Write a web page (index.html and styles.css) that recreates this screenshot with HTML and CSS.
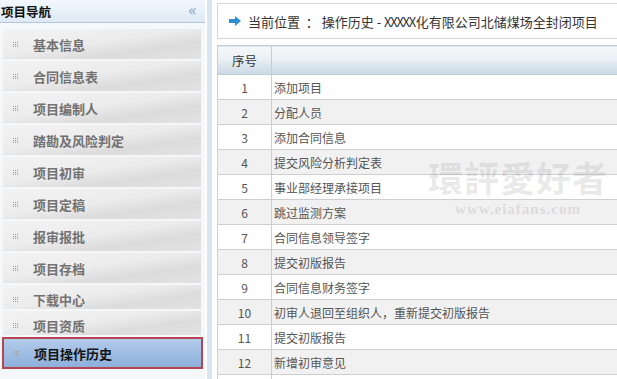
FILE: index.html
```html
<!DOCTYPE html>
<html lang="zh-CN">
<head>
    <meta charset="UTF-8">
    <meta name="viewport" content="width=device-width, initial-scale=1.0">
    <title>操作历史</title>
    <link rel="stylesheet" href="styles.css">
</head>
<body>

<!-- Menu de navigation -->
<div class="sidebar">
    <div class="sidebar-head">
        <span>项目导航</span>
        <span class="collapse">&laquo;</span>
    </div>
    <ul class="nav">
        <li><i class="dots"></i>基本信息</li>
        <li><i class="dots"></i>合同信息表</li>
        <li><i class="dots"></i>项目编制人</li>
        <li><i class="dots"></i>踏勘及风险判定</li>
        <li><i class="dots"></i>项目初审</li>
        <li><i class="dots"></i>项目定稿</li>
        <li><i class="dots"></i>报审报批</li>
        <li><i class="dots"></i>项目存档</li>
        <li class="short"><i class="dots"></i>下载中心</li>
        <li class="short"><i class="dots"></i>项目资质</li>
        <li class="active"><i class="dots"></i>项目操作历史</li>
    </ul>
</div>
<div class="splitter"></div>

<!-- Contenu -->
<div class="content">
    <div class="breadcrumb">
        <svg class="arrow" width="12" height="10" viewBox="0 0 12 10"><path d="M0 3h6V0l6 5-6 5V7H0z" fill="#2f8ed3"/></svg>
        <span>当前位置&nbsp;&nbsp;：&nbsp;操作历史 - <span class="narrow">XXXXX</span>化有限公司北储煤场全封闭项目</span>
    </div>
    <table>
        <thead>
            <tr><th class="num">序号</th><th></th></tr>
        </thead>
        <tbody id="history"></tbody>
    </table>
    <div class="watermark">
        <div class="wm-title">環評愛好者</div>
        <div class="wm-url">www.eiafans.com</div>
    </div>
</div>

<script>
    // Liste des opérations
    const steps = [
        '添加项目', '分配人员', '添加合同信息', '提交风险分析判定表',
        '事业部经理承接项目', '跳过监测方案', '合同信息领导签字', '提交初版报告',
        '合同信息财务签字', '初审人退回至组织人，重新提交初版报告', '提交初版报告', '新增初审意见', ''
    ];
    const tbody = document.getElementById('history');
    steps.forEach((s, i) => {
        const tr = document.createElement('tr');
        tr.innerHTML = `<td class="num">${s ? i + 1 : ''}</td><td>${s}</td>`;
        tbody.appendChild(tr);
    });
</script>

</body>
</html>
```

FILE: styles.css
```css
html, body {
    margin: 0;
    height: 100%;
    overflow: hidden;
}
body {
    display: flex;
    background-color: #fff;
    font-family: "Noto Sans CJK SC", "Noto Sans", sans-serif;
}
.sidebar {
    width: 205px;
    flex-shrink: 0;
    background-color: #f6f7f8;
}
.sidebar-head {
    height: 22px;
    display: flex;
    justify-content: space-between;
    align-items: center;
    padding: 0 8px 0 1px;
    background: linear-gradient(#f2f7fc, #dde9f5);
    border-bottom: 1px solid #b4c8dc;
    font-size: 12.5px;
    font-weight: bold;
    color: #111;
}
.collapse {
    font-family: "DejaVu Sans", sans-serif;
    font-weight: normal;
    font-size: 15px;
    color: #8eaacb;
}
.nav {
    list-style: none;
    margin: 0;
    padding: 6px 4px 0 3px;
    display: flex;
    flex-direction: column;
    gap: 2px;
}
.nav li {
    height: 30px;
    display: flex;
    align-items: center;
    background: linear-gradient(172deg, #f3f3f3 0%, #ececec 45%, #dcdcdc 70%, #e2e2e2 100%);
    font-size: 13px;
    font-weight: bold;
    color: #727272;
}
.nav li.short {
    height: 20px;
    padding-top: 4px;
}
.nav li.active {
    height: 28px;
    margin-left: -1px;
    margin-right: -2px;
    background: linear-gradient(#b2cbea, #8eb0dc);
    border: 2px solid #b84651;
    color: #141414;
}
.dots {
    width: 1px;
    height: 1px;
    margin: 0 19px 0 10px;
    align-self: center;
    position: relative;
    top: -2px;
    background-color: #9a9a9a;
    box-shadow: 2px 0 #9a9a9a, 4px 0 #9a9a9a,
                0 2px #9a9a9a, 2px 2px #9a9a9a, 4px 2px #9a9a9a,
                0 4px #9a9a9a, 2px 4px #9a9a9a, 4px 4px #9a9a9a;
}
.splitter {
    width: 5px;
    margin-left: 2px;
    flex-shrink: 0;
    background-color: #d9e5f1;
}
.content {
    flex: 1;
    position: relative;
    padding: 3px 0 0 5px;
    margin-right: -20px;
}
.breadcrumb {
    height: 34px;
    display: flex;
    align-items: center;
    gap: 7px;
    padding-left: 11px;
    border: 1px solid #d4d4d4;
    font-size: 13px;
    color: #333;
}
.narrow {
    letter-spacing: -1.3px;
    margin-right: 1px;
}
table {
    width: 100%;
    margin-top: 6px;
    border-collapse: collapse;
    font-size: 12px;
    color: #555;
}
th {
    height: 26px;
    background: linear-gradient(#f6f8fa, #eaf0f5 45%, #c9d8e4);
    border: 1px solid #c3cdd6;
    font-weight: normal;
    font-size: 12.5px;
    color: #333;
}
td {
    height: 24px;
    padding: 0 0 0 2px;
    border: 1px solid #cfcfcf;
    text-align: left;
}
td.num, th.num {
    width: 53px;
    padding: 0;
    text-align: center;
}
tbody tr:nth-child(even) {
    background-color: #f1f1f1;
}
.watermark {
    position: absolute;
    left: 216px;
    top: 158px;
    text-align: center;
    pointer-events: none;
}
.wm-title {
    font-family: "Noto Sans CJK TC", sans-serif;
    font-weight: bold;
    font-size: 35px;
    letter-spacing: 1px;
    line-height: 38px;
    color: rgba(120, 120, 120, 0.16);
}
.wm-url {
    margin-top: 6px;
    font-family: "Liberation Serif", serif;
    font-weight: bold;
    font-size: 15px;
    line-height: 15px;
    letter-spacing: 1px;
    color: rgba(120, 120, 120, 0.2);
}
```
